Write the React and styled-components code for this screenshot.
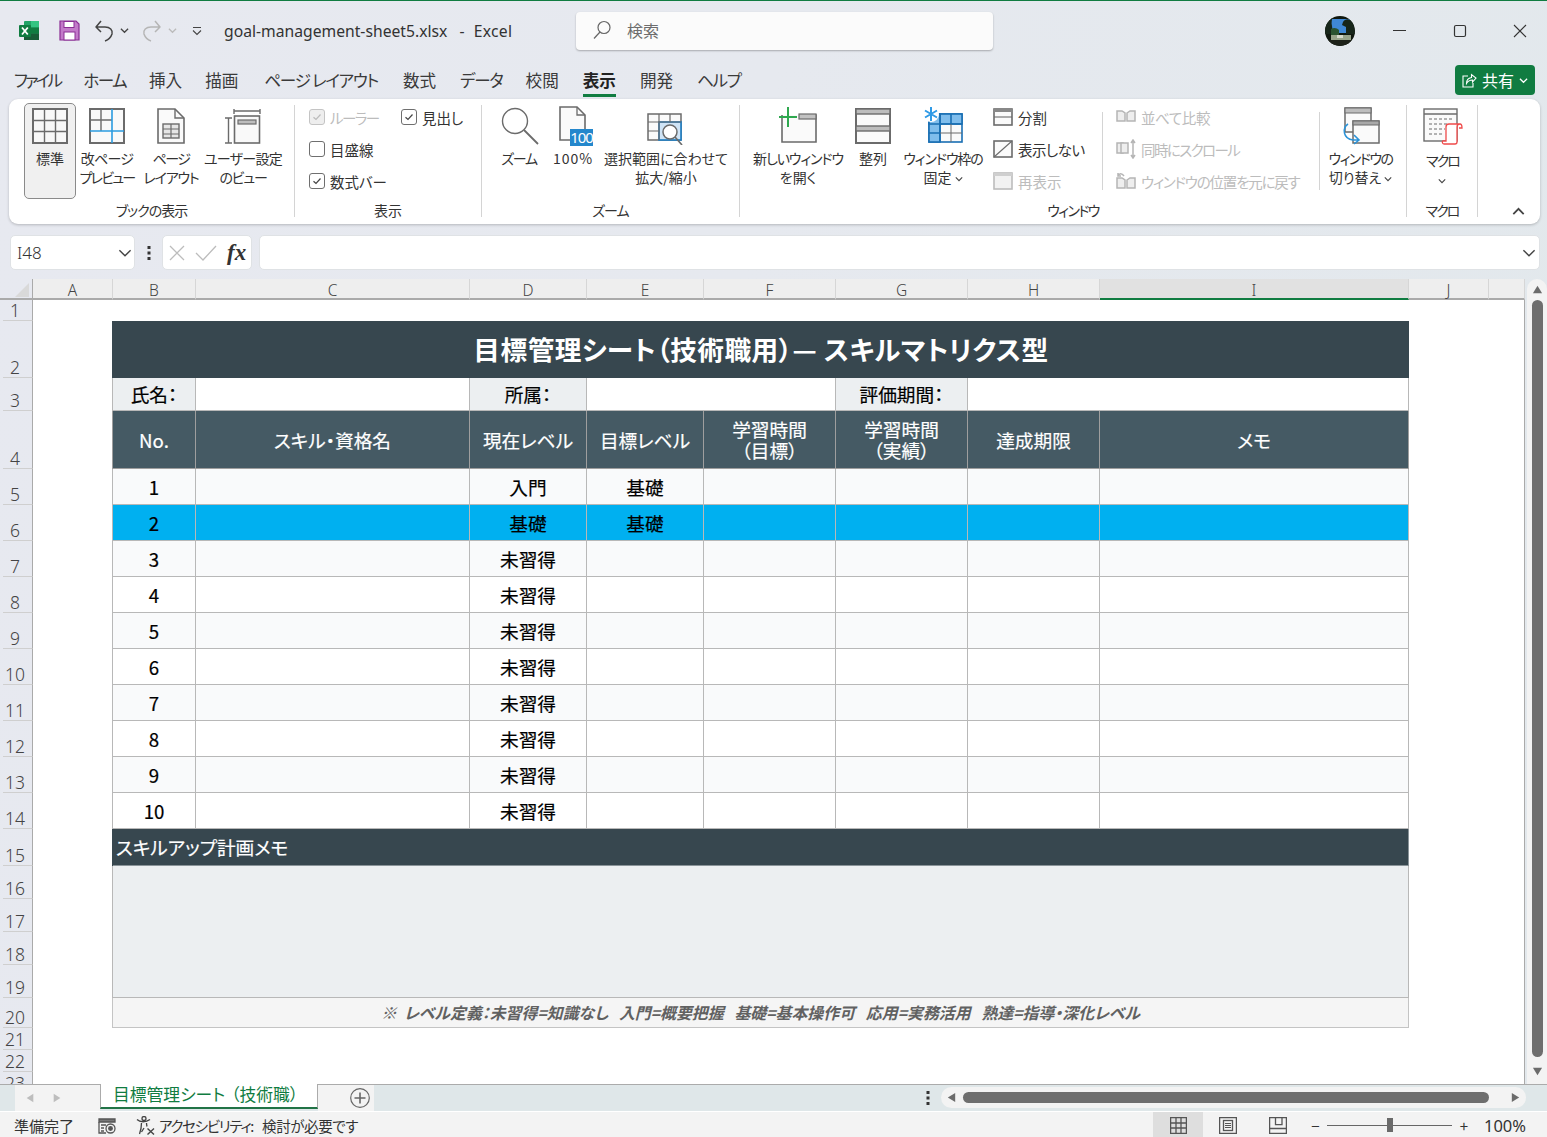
import React from "react";
import styled, { createGlobalStyle } from "styled-components";

const FONT = '"Noto Sans CJK JP", "Noto Sans", sans-serif';
const GREY = "#6b6b6b";
const DIS = "#bcbcbc";

const Global = createGlobalStyle`
  html, body { margin: 0; padding: 0; overflow: hidden; }
  * { box-sizing: border-box; }
  body { font-family: ${FONT}; font-feature-settings: "palt"; color: #333; }
`;

const Shell = styled.div`
  width: 1547px; height: 1137px; display: flex; flex-direction: column; overflow: hidden;
  background: linear-gradient(100deg, #e7e9f0 0%, #e6e9ef 45%, #e2e8ec 100%);
  border-top: 1px solid #107c41;
`;
const Narrow = styled.span`
  letter-spacing: ${p => p.$ls || 0}px; margin-left: ${p => p.$ml || 0}px;
`;
/* ---------- title bar ---------- */
const TitleBar = styled.div`
  height: 59px; display: flex; align-items: center; padding-left: 19px; flex: none;
`;
const QuickIcon = styled.span`
  display: flex; align-items: center; margin-left: ${p => p.$ml || 0}px;
`;
const StatusIcon = styled(QuickIcon)`
  padding-top: 2px;
`;
const FileName = styled.div`
  margin-left: 21px; width: 352px; font: 400 15.7px "Noto Sans", sans-serif; color: #333; white-space: pre; padding-top: 1px;
`;
const SearchBox = styled.div`
  width: 417px; height: 38px; background: #fbfbfb; border-radius: 4px; margin-top: 1px;
  box-shadow: 0 1px 2px rgba(0,0,0,.28); display: flex; align-items: center; padding: 0 0 3px 16px; gap: 15px;
  font-size: 16px; color: #6d6d6d;
`;
const WinControls = styled.div`
  margin-left: auto; margin-right: -3px; display: flex; align-items: center;
`;
const WinBtn = styled.span`
  width: 60px; display: flex; justify-content: center; align-items: center;
`;
const Avatar = styled.span`
  display: flex; margin-right: 15px;
`;
/* ---------- menu ---------- */
const MenuBar = styled.div`
  height: 39px; flex: none; display: flex; align-items: flex-start; padding: 7px 12px 0 14px; gap: 23px; position: relative;
`;
const MenuItem = styled.div`
  font-size: 16.6px; line-height: 26px; height: 30px; color: ${p => (p.$active ? "#222" : "#3a3a3a")};
  font-weight: ${p => (p.$active ? 700 : 400)}; white-space: pre; letter-spacing: ${p => p.$ls || 0}px;
  margin-left: ${p => p.$ml || 0}px;
  border-bottom: ${p => (p.$active ? "3px solid #107c41" : "3px solid transparent")};
`;
const ShareBtn = styled.div`
  margin-left: auto; margin-top: -2px; width: 80px; height: 30px; background: #107c41; color: #fff; border-radius: 4px;
  display: flex; align-items: center; justify-content: center; gap: 5px; font-size: 16px;
`;
/* ---------- ribbon ---------- */
const Ribbon = styled.div`
  flex: none; margin-left: 9px; width: 1531px; height: 125px; background: #fff; border-radius: 9px; padding-top: 6px;
  display: flex; box-shadow: 0 1px 3px rgba(0,0,0,.22); position: relative;
`;
const Group = styled.div`
  width: ${p => p.$w}px; height: 112px; border-right: 1px solid #d4d4d4;
  display: flex; flex-direction: column; padding-left: ${p => p.$pl || 0}px;
`;
const GroupBody = styled.div`
  flex: 1; display: flex; align-items: flex-start; min-height: 0;
`;
const GroupLabel = styled.div`
  height: 18px; line-height: 18px; text-align: center; font-size: 14px; color: #333; margin: 2px 0 -2px -${p => p.$pl || 0}px; flex: none;
  letter-spacing: ${p => p.$ls || 0}px;
`;
const LargeBtn = styled.div`
  width: ${p => p.$w}px; height: 96px; margin-top: -2px; padding-top: 3px; flex: none;
  display: flex; flex-direction: column; align-items: center; border-radius: 5px;
  background: ${p => (p.$on ? "#f0f0f0" : "transparent")}; border: 1px solid ${p => (p.$on ? "#8a8a8a" : "transparent")};
`;
const IconSlot = styled.div`
  height: 38px; display: flex; align-items: center; justify-content: center; flex: none;
`;
const LargeText = styled.div`
  margin-top: ${p => p.$mt ?? 4}px; font-size: 14px; line-height: 19px; text-align: center; white-space: pre; color: #333;
`;
const SmallCol = styled.div`
  width: ${p => p.$w}px; margin-left: ${p => p.$ml || 0}px; margin-top: -4px; flex: none; display: flex; flex-direction: column;
`;
const SmallRow = styled.div`
  height: 32px; display: flex; align-items: center; gap: ${p => p.$gap || 5}px; font-size: 14.5px; white-space: pre;
  color: ${p => (p.$off ? DIS : "#333")}; letter-spacing: ${p => p.$ls || 0}px;
`;
const InnerSep = styled.div`
  width: 1px; height: 78px; margin-top: 7px; background: #d4d4d4; flex: none;
`;
const CheckGrid = styled.div`
  display: grid; grid-template-columns: 92px 80px; margin-top: -4px;
`;
const CheckBox = styled.span`
  width: 16px; height: 16px; border-radius: 3px; flex: none; display: flex; align-items: center; justify-content: center;
  border: 1px solid ${p => (p.$off ? "#c4c4c4" : "#6f6f6f")}; background: ${p => (p.$off ? "#eeeeee" : "#fff")};
`;
const CollapseBtn = styled.span`
  position: absolute; right: 15px; bottom: 6px; display: flex;
`;
/* ---------- formula bar ---------- */
const FormulaBar = styled.div`
  flex: none; height: 55px; padding: 11px 7px 9px 10px; display: flex; align-items: stretch;
`;
const NameBox = styled.div`
  width: 125px; background: #fff; border: 1px solid #dfe2e5; border-radius: 5px; display: flex; align-items: center;
  justify-content: space-between; padding: 0 2px 0 6px; font: 300 17px "Noto Sans", sans-serif; color: #333;
`;
const Dots = styled.div`
  width: 27px; display: flex; align-items: center; justify-content: center;
`;
const FxBox = styled.div`
  width: 90px; background: #fff; border: 1px solid #dfe2e5; border-radius: 5px; display: flex; align-items: center;
  padding-left: 6px; gap: 10px;
`;
const FxText = styled.span`
  font: italic 700 23px "Liberation Serif", serif; color: #333;
`;
const FormulaInput = styled.div`
  flex: 1; margin-left: 7px; background: #fff; border: 1px solid #dfe2e5; border-radius: 5px; display: flex; align-items: center;
  justify-content: flex-end; padding-right: 3px;
`;
/* ---------- sheet ---------- */
const SheetArea = styled.div`
  flex: none; height: 805px; display: flex;
`;
const Sheet = styled.div`
  width: 1525px; height: 805px; overflow: hidden; display: grid;
  grid-template-columns: 33px 80px 83px 274px 117px 117px 132px 132px 132px 309px 80px 36px;
  grid-template-rows: 21px 21px 57px 33px 58px repeat(10, 36px) 37px repeat(4, 33px) 30px 22px 22px 22px;
`;
const Corner = styled.div`
  border-right: 1px solid #aaa; border-bottom: 2px solid #aaa; display: flex; align-items: flex-end; justify-content: flex-end; padding: 0 3px 1px 0;
`;
const ColHead = styled.div`
  display: flex; align-items: center; justify-content: center; padding-top: 2px;
  background: ${p => (p.$active ? "#e1e1e1" : "#eeeeee")}; font: 300 15.5px "Noto Sans", sans-serif; color: #444;
  border-right: 1px solid #d6d6d6;
  border-bottom: 2px solid ${p => (p.$active ? "#107c41" : "#aaa")};
`;
const RowHead = styled.div`
  margin-left: 3px; border-right: 1px solid #aaa; border-bottom: 1px solid #cfcfcf; display: flex; align-items: flex-end; justify-content: center;
  font: 300 17.5px/19px "Noto Sans", sans-serif; color: #444; padding-right: 5px;
`;
const Blank = styled.div`
  background: #fff; grid-column: span ${p => p.$span || 1};
  border-right: ${p => (p.$edge ? `1px solid ${p.$edge}` : "none")};
`;
const Cell = styled.div`
  grid-column: span ${p => p.$span || 1}; grid-row: span ${p => p.$rows || 1};
  background: ${p => p.$bg || "#fff"}; color: ${p => p.$fg || "#000"};
  border-right: 1px solid ${p => p.$line || "#b8b8b8"}; border-bottom: 1px solid ${p => p.$line || "#b8b8b8"};
  display: flex; align-items: center; justify-content: ${p => p.$left ? "flex-start" : "center"}; text-align: center;
  font-size: 18.67px; line-height: 21px; white-space: pre; -webkit-text-stroke: .2px currentColor;
  padding: 0 0 1px ${p => (p.$left ? 3 : 0)}px;
`;
const TitleCell = styled(Cell)`
  font-size: 26.67px; font-weight: 700; color: #fff; background: #37474f; border: none; letter-spacing: .5px; padding-bottom: 2px; -webkit-text-stroke: 0;
`;
const NoteCell = styled(Cell)`
  font-size: 15.9px; font-style: italic; font-weight: 700; color: #616161; background: #f5f5f5; -webkit-text-stroke: 0;
`;
/* ---------- vertical scrollbar ---------- */
const VScroll = styled.div`
  margin-left: 2px; width: 20px; height: 805px; background: #f3f3f3; border-radius: 10px 10px 0 0;
  display: flex; flex-direction: column; align-items: center; padding-top: 5px;
`;
const VThumb = styled.div`
  width: 11px; height: 757px; margin: 5px 0 9px; background: #6e6e6e; border-radius: 6px; flex: none;
`;
/* ---------- sheet tabs ---------- */
const TabBar = styled.div`
  flex: none; height: 28px; display: flex; background: #dfe7e9; border-top: 1px solid #ababab; border-bottom: 1px solid #fff; position: relative;
`;
const TabNav = styled.div`
  margin-left: 15px; width: 85px; background: #f3f3f3; display: flex; align-items: center; gap: 17px; padding-left: 10px;
`;
const SheetTab = styled.div`
  width: 218px; background: #fff; margin-top: -1px; border-left: 1px solid #ababab; border-right: 1px solid #ababab; border-bottom: 2px solid #217346;
  color: #107c41; font-size: 16.8px; line-height: 20px; padding-left: 12px; height: 25px; white-space: pre;
`;
const AddArea = styled.div`
  width: 56px; background: #f3f3f3; display: flex; align-items: center; padding-left: 32px;
`;
const TabDots = styled.div`
  margin-left: 546px; width: 16px; display: flex; justify-content: center; align-items: center;
`;
const HScroll = styled.div`
  margin-left: 5px; width: 585px; height: 21px; margin-top: 2px; background: #f3f3f3; border-radius: 11px; display: flex; align-items: center; padding-left: 5px;
`;
const HThumb = styled.div`
  width: 526px; height: 11px; background: #6e6e6e; border-radius: 6px; margin: 0 21px 0 6px;
`;
/* ---------- status bar ---------- */
const StatusBar = styled.div`
  flex: 1; background: #f3f3f3; display: flex; align-items: center; font-size: 15px; color: #333; padding-left: 14px;
`;
const StatusText = styled.span`
  margin-left: ${p => p.$ml || 0}px; white-space: pre; letter-spacing: ${p => p.$ls || 0}px; font-size: ${p => p.$size || 15}px; padding-top: 2px;
`;
const StatusRight = styled.div`
  margin-left: auto; display: flex; align-items: center; height: 100%; padding-right: 21px;
`;
const ViewBtn = styled.div`
  width: 50px; height: 100%; padding-top: 2px; display: flex; align-items: center; justify-content: center; background: ${p => (p.$on ? "#dedede" : "transparent")};
`;
const ZoomTrack = styled.div`
  width: 125px; height: 1px; margin: 2px 8px 0 7px; background: #666; position: relative;
`;
const ZoomThumb = styled.div`
  position: absolute; left: 60px; top: -7px; width: 6px; height: 14px; background: #6a6a6a;
`;
const ZoomText = styled.span`
  font: 400 16.5px "Noto Sans", sans-serif; color: #333; margin-left: 16px; padding-top: 2px;
`;

/* ---------- icons ---------- */
const Chevron = ({ size = 9, color = "#444", up, w = 1.4 }) => (
  <svg width={size} height={size} viewBox="0 0 10 10" fill="none" stroke={color} strokeWidth={w}>
    <path d={up ? "M1 7 5 3l4 4" : "M1 3l4 4 4-4"} />
  </svg>
);
const Check = ({ color = "#444" }) => (
  <svg width="12" height="12" viewBox="0 0 12 12" fill="none" stroke={color} strokeWidth="1.2"><path d="M2.5 6.2 5 8.5l4.5-5" /></svg>
);
const ExcelLogo = () => (
  <svg width="21" height="21" viewBox="0 0 21 21">
    <rect x="5" y="1" width="15" height="19" rx="1" fill="#21a366" />
    <rect x="12" y="1" width="8" height="6.5" fill="#33c481" />
    <rect x="12" y="7.5" width="8" height="6" fill="#107c41" />
    <rect x="5" y="13.5" width="15" height="6.5" fill="#185c37" />
    <rect x="0" y="5" width="12" height="12" rx="1" fill="#107c41" />
    <path d="M3 7.5 8.8 14.5M8.8 7.5 3 14.5" stroke="#fff" strokeWidth="1.8" />
  </svg>
);
const SaveIcon = () => (
  <svg width="21" height="21" viewBox="0 0 21 21">
    <path d="M1 1h16l3 3v16H1z" fill="#c27ac9" stroke="#8a2e94" strokeWidth="1.2" />
    <rect x="5" y="1.5" width="10" height="6" fill="#fff" stroke="#8a2e94" />
    <rect x="5" y="12" width="11" height="8" fill="#fff" stroke="#8a2e94" />
  </svg>
);
const UndoIcon = ({ color = "#444", flip }) => (
  <svg width="22" height="22" viewBox="0 0 22 22" fill="none" stroke={color} strokeWidth="1.5" style={flip ? { transform: "scaleX(-1)" } : undefined}>
    <path d="M7 1 2 7h9c5 0 8 3 7 7-1 3-4 6-7 7M2 7l5 5" strokeLinejoin="round" />
  </svg>
);
const QatMore = () => (
  <svg width="12" height="12" viewBox="0 0 12 12" fill="none" stroke="#444" strokeWidth="1.1"><path d="M2 2.5h8M2 5.5l4 4 4-4" /></svg>
);
const SearchIcon = () => (
  <svg width="20" height="20" viewBox="0 0 20 20" fill="none" stroke="#666" strokeWidth="1.2"><circle cx="12" cy="7.5" r="6" /><path d="M8 12 2 18.5" /></svg>
);
const AvatarIcon = () => (
  <svg width="30" height="30" viewBox="0 0 30 30">
    <defs><clipPath id="av"><circle cx="15" cy="15" r="15" /></clipPath></defs>
    <g clipPath="url(#av)">
      <rect width="30" height="30" fill="#10180f" />
      <rect x="5" y="3" width="20" height="14" fill="#3f88d6" />
      <path d="M0 0h8c-1 3-2 7-1 10l1 8H0zM18 6c2-4 7-3 10-1l2 13h-9l0-7-4-2z" fill="#17261a" />
      <path d="M6 13c3-2 6-1 8 1v5H6z" fill="#2b5330" />
      <rect x="6" y="19" width="20" height="5" fill="#98a38a" />
      <rect x="12" y="19" width="6" height="3" fill="#d5d9cb" />
      <path d="M0 24h30v6H0z" fill="#1d2119" />
    </g>
  </svg>
);
const WinMin = () => <svg width="14" height="14" fill="none" stroke="#333"><path d="M0 6.5h13" /></svg>;
const WinMax = () => <svg width="14" height="14" fill="none" stroke="#333" strokeWidth="1.2"><rect x="1.5" y="1.5" width="11" height="11" rx="1.5" /></svg>;
const WinClose = () => <svg width="14" height="14" fill="none" stroke="#333" strokeWidth="1.1"><path d="M1 1l12 12M13 1 1 13" /></svg>;
const ShareIcon = () => (
  <svg width="15" height="15" viewBox="0 0 15 15" fill="none" stroke="#fff" strokeWidth="1.1">
    <path d="M6 3H1v11h10V10" /><path d="M4.5 10.500c0-3 2-5.500 5-6V1.500L14 5l-3.500 4V7c-3 0-4.500 1-6 3.500z" />
  </svg>
);
const Big = ({ w = 38, h = 38, children }) => (
  <svg width={w} height={h} viewBox={`0 0 ${w} ${h}`} fill="none" stroke={GREY} strokeWidth="2">{children}</svg>
);
const NormalIcon = () => (
  <Big><rect x="2" y="2" width="34" height="34" fill="#f8f8f8" />
    <path strokeWidth="1.4" d="M13.5 2v34M24.5 2v34M2 13.5h34M2 24.5h34" /></Big>
);
const BreakIcon = () => (
  <Big><rect x="2" y="2" width="34" height="34" fill="#f9f9f9" />
    <path strokeWidth="1.4" d="M13 2v22M2 13h22" />
    <path stroke="#2b9ce0" strokeWidth="1.6" d="M24 2v34M2 24h34" /></Big>
);
const PageIcon = () => (
  <Big w={30}><path strokeWidth="1.6" fill="#fafafa" d="M2 2h17l9 9v25H2z" /><path strokeWidth="1.4" d="M19 2v9h9" />
    <rect x="7" y="17" width="16" height="14" strokeWidth="1.4" fill="#e6e6e6" />
    <path strokeWidth="1.2" d="M7 22h16M7 27h16M15 17v14" /></Big>
);
const CustomIcon = () => (
  <Big w={38}>
    <path strokeWidth="1.4" d="M10 2v5M36 2v5M10 4h26" />
    <path strokeWidth="1.4" d="M1 11h7M4.5 11v25M1 36h7" />
    <rect x="10.5" y="9" width="25" height="27" strokeWidth="1.6" fill="#f9f9f9" />
    <rect x="14" y="13" width="18" height="4" strokeWidth="1.2" fill="#bdbdbd" />
  </Big>
);
const ZoomIcon = () => (
  <svg width="40" height="40" viewBox="0 0 40 40" fill="none" stroke={GREY} strokeWidth="1.4">
    <circle cx="16" cy="15" r="12.5" /><path strokeWidth="1.8" d="M25 24l14 14" />
  </svg>
);
const HundredIcon = () => (
  <svg width="40" height="40" viewBox="-6 0 40 40" fill="none" stroke={GREY} strokeWidth="1.6">
    <path d="M1 1h17l8 8v25H1z" fill="#fafafa" /><path strokeWidth="1.3" d="M18 1v8h8" />
    <rect x="11" y="23" width="23" height="17" fill="#2487cc" stroke="none" />
    <text x="22.5" y="37" textAnchor="middle" fontSize="15" fontFamily='"Noto Sans", sans-serif' fill="#fff" stroke="none" letterSpacing="-1">100</text>
  </svg>
);
const FitIcon = () => (
  <svg width="38" height="38" viewBox="0 -3 38 38" fill="none" stroke={GREY} strokeWidth="1.5">
    <rect x="1" y="4" width="33" height="26" fill="#fafafa" />
    <rect x="12" y="12" width="22" height="18" fill="#cfe4f6" stroke="#1a7cc4" strokeWidth="1.6" />
    <path strokeWidth="1.2" d="M12 4v26M23 4v8M1 12h33M1 21h11" />
    <circle cx="23" cy="22" r="7" fill="#fff" /><path strokeWidth="1.6" d="M28 27l7 8" />
  </svg>
);
const NewWinIcon = () => (
  <svg width="38" height="38" viewBox="0 0 38 38" fill="none" stroke={GREY} strokeWidth="1.6">
    <path d="M3 8v27h34V8H20" fill="#fafafa" /><rect x="20" y="7" width="17" height="5" fill="#c2c2c2" strokeWidth="1.2" />
    <path stroke="#2fa84f" strokeWidth="2" d="M9 0v20M0 10h18" />
  </svg>
);
const ArrangeIcon = () => (
  <Big><rect x="2" y="2" width="34" height="34" fill="#fafafa" />
    <rect x="2" y="2" width="34" height="5" fill="#bdbdbd" strokeWidth="1.4" />
    <rect x="2" y="19" width="34" height="5" fill="#bdbdbd" strokeWidth="1.4" /></Big>
);
const FreezeIcon = () => (
  <svg width="40" height="40" viewBox="0 0 40 40" fill="none" stroke="#1a6fb3" strokeWidth="1.6">
    <rect x="6" y="8" width="33" height="28" fill="#fafafa" />
    <rect x="6" y="8" width="33" height="10" fill="#7fbdec" />
    <rect x="6" y="8" width="11" height="28" fill="#7fbdec" />
    <path d="M17 8v28M28 8v10M6 18h33M6 27h11" /><path stroke={GREY} strokeWidth="1" d="M28 18v18M17 27h22" />
    <circle cx="8" cy="8" r="8" fill="#fff" stroke="none" />
    <path stroke="#2f9ae6" strokeWidth="2" d="M8 1v14M2 4.500l12 7M14 4.500l-12 7" />
  </svg>
);
const SmallSplit = () => (
  <svg width="20" height="18" viewBox="0 0 20 18" fill="none" stroke={GREY} strokeWidth="1.6">
    <rect x="1" y="1" width="18" height="16" fill="#fafafa" /><rect x="1" y="1" width="18" height="3" fill="#888" stroke="none" /><path d="M1 9h18" strokeWidth="1.1" /></svg>
);
const SmallHide = () => (
  <svg width="20" height="18" viewBox="0 0 20 18" fill="none" stroke={GREY} strokeWidth="1.6">
    <rect x="1" y="1" width="18" height="16" fill="#fafafa" /><path d="M1 17 19 1" strokeWidth="1.2" /></svg>
);
const SmallShow = () => (
  <svg width="20" height="18" viewBox="0 0 20 18" fill="#f2f2f2" stroke={DIS} strokeWidth="1.6">
    <rect x="1" y="1" width="18" height="16" /><rect x="1" y="1" width="18" height="3" fill="#cfcfcf" stroke="none" /></svg>
);
const Book = ({ y = 4 }) => (
  <g fill="#eee" stroke="#b5b5b5" strokeWidth="1.5">
    <path d={`M1 ${y}h5l3 2v8H1z`} /><path d={`M11 ${y + 2}l3-2h5v10h-8z`} />
  </g>
);
const CompareIcon = () => <svg width="20" height="18" viewBox="0 0 20 18"><Book y={3} /></svg>;
const SyncIcon = () => (
  <svg width="20" height="20" viewBox="0 0 20 20" fill="none" stroke="#b5b5b5" strokeWidth="1.5">
    <path d="M1 4h6v10H1z" fill="#eee" /><path d="M5 4h7v10H5z" fill="#eee" /><path d="M17 1v18M15 4l2-3 2 3M15 16l2 3 2-3" />
  </svg>
);
const ResetIcon = () => (
  <svg width="20" height="20" viewBox="0 0 20 20" fill="none" stroke="#b5b5b5" strokeWidth="1.5">
    <Book y={7} /><path d="M8 5C6 2 3 2 2 5M2 2v3h3" />
  </svg>
);
const SwitchIcon = () => (
  <svg width="38" height="38" viewBox="0 0 38 38" fill="none" stroke={GREY} strokeWidth="1.5">
    <rect x="3" y="1" width="26" height="24" fill="#fafafa" /><rect x="3" y="1" width="26" height="5" fill="#bdbdbd" strokeWidth="1" />
    <rect x="11" y="14" width="26" height="22" fill="#fafafa" /><rect x="11" y="14" width="26" height="4" fill="#a8a8a8" strokeWidth="1" />
    <path stroke="#2b93d8" strokeWidth="1.6" d="M6 17c-6 4-5 15 5 16h6M12 28l5 5-5 4" />
  </svg>
);
const MacroIcon = () => (
  <svg width="40" height="38" viewBox="0 -1 40 38" fill="none" stroke={GREY} strokeWidth="1.4">
    <rect x="1" y="1" width="33" height="32" fill="#fafafa" /><path d="M1 6h33" strokeWidth="1.4" />
    <path strokeDasharray="3 2" strokeWidth="1.1" d="M6 11h24M6 16h20M6 21h16M6 26h14" />
    <path stroke="#ef4a4a" strokeWidth="1.3" fill="#fff" d="M21 36h11c2 0 2-2 2-2V19c0-2 1-3 3-3h-11c-2 0-3 1-3 3v14h-3c-1 0-1 3 1 3zM37 16c2 0 2 2 2 4h-3" />
  </svg>
);
const Triangle = ({ dir, color = GREY, size = 11 }) => {
  const d = { up: "M1 10 6 2l5 8z", down: "M1 2h10L6 10z", left: "M10 1v10L2 6z", right: "M2 1v10l8-5z" }[dir];
  return <svg width={size} height={size} viewBox="0 0 12 12" fill={color}><path d={d} /></svg>;
};
const VDots = ({ color = "#333" }) => (
  <svg width="4" height="14" viewBox="0 0 4 14" fill={color}><rect width="3" height="3" x=".5" /><rect width="3" height="3" x=".5" y="5.500" /><rect width="3" height="3" x=".5" y="11" /></svg>
);
const CrossIcon = () => <svg width="16" height="16" fill="none" stroke="#bcbcbc" strokeWidth="1.3"><path d="M1 1l14 14M15 1 1 15" /></svg>;
const TickIcon = () => <svg width="22" height="16" fill="none" stroke="#bcbcbc" strokeWidth="1.3"><path d="M1 8l7 7L21 1" /></svg>;
const PlusCircle = () => (
  <svg width="20" height="20" viewBox="0 0 20 20" fill="none" stroke="#666" strokeWidth="1.2"><circle cx="10" cy="10" r="9.300" /><path strokeWidth="1.6" d="M10 4.500v11M4.500 10h11" /></svg>
);
const RecordIcon = () => (
  <svg width="18" height="16" viewBox="0 0 18 16" fill="none" stroke="#555" strokeWidth="1.3">
    <path d="M1 1h16v3H1z" fill="#777" /><path d="M1 4v11h7M3 7h5M3 10h3M3 13h3" /><circle cx="12.500" cy="10.500" r="4.500" /><circle cx="12.500" cy="10.500" r="1.800" fill="#555" />
  </svg>
);
const AccessIcon = () => (
  <svg width="19" height="19" viewBox="0 0 19 19" fill="none" stroke="#444" strokeWidth="1.3">
    <circle cx="8" cy="2.500" r="2" /><path d="M1 3.500c3 3 9 3 13 0M5.500 7c0 4-.5 7-2 11M10.500 7c0 1 .2 2 .5 3.500M8 12l-2.500 4" /><path strokeWidth="1.4" d="M11.500 12.500l6.500 6M18 12.500l-6.500 6" />
  </svg>
);
const GridView = () => (
  <svg width="17" height="17" viewBox="0 0 17 17" fill="none" stroke="#555" strokeWidth="1.3"><rect x=".6" y=".6" width="15.800" height="15.800" /><path d="M6 .6v15.800M11 .6v15.800M.6 6h15.800M.6 11h15.800" /></svg>
);
const PageView = () => (
  <svg width="18" height="17" viewBox="0 0 18 17" fill="none" stroke="#555" strokeWidth="1.3"><rect x=".6" y=".6" width="16.800" height="15.800" /><rect x="4.500" y="3.500" width="9" height="10" /><path strokeWidth="1" d="M6 6.500h6M6 8.500h6M6 10.500h6" /></svg>
);
const BreakView = () => (
  <svg width="18" height="17" viewBox="0 0 18 17" fill="none" stroke="#555" strokeWidth="1.3"><rect x=".6" y=".6" width="16.800" height="15.800" /><path d="M.6 11.500h16.800M6.500 .6v7h6.500V.6" /></svg>
);

/* ---------- data ---------- */
const MENU = [["ファイル", -2.8], ["ホーム", -1.6], ["挿入"], ["描画"], ["ページ レイアウト", -1.3, 3], ["数式", 0, 2], ["データ", -1.3, 1], ["校閲"], ["表示", 0, 1], ["開発", 0, 1], ["ヘルプ", -1.3, 1]];
const COLS = ["A", "B", "C", "D", "E", "F", "G", "H", "I", "J", ""];
const ROWS = [
  [1, "入門", "基礎"], [2, "基礎", "基礎"], [3, "未習得", ""], [4, "未習得", ""], [5, "未習得", ""],
  [6, "未習得", ""], [7, "未習得", ""], [8, "未習得", ""], [9, "未習得", ""], [10, "未習得", ""],
];
const HEADS = ["No.", "スキル・資格名", "現在レベル", "目標レベル", "学習時間\n（目標）", "学習時間\n（実績）", "達成期限", "メモ"];
const DARK = "#37474f";
const HEAD = "#455a64";
const LABEL = "#eceff1";
const HEAD_LINE = "#9e9e9e";

const RowBg = i => (i === 1 ? "#00b0f0" : i % 2 === 0 ? "#f9fafb" : "#ffffff");

const Btn = ({ w, on, icon, text, mt }) => (
  <LargeBtn $w={w} $on={on}>
    <IconSlot>{icon}</IconSlot>
    <LargeText $mt={mt}>{text}</LargeText>
  </LargeBtn>
);
const Chk = ({ on, off, text, ls }) => (
  <SmallRow $off={off} $gap={5} $ls={ls}>
    <CheckBox $off={off}>{on && <Check color={off ? "#bbb" : "#444"} />}</CheckBox>
    {text}
  </SmallRow>
);

export default function App() {
  const rowNo = n => <RowHead>{n}</RowHead>;
  return (
    <Shell>
      <Global />
      <TitleBar>
        <QuickIcon><ExcelLogo /></QuickIcon>
        <QuickIcon $ml={19}><SaveIcon /></QuickIcon>
        <QuickIcon $ml={14}><UndoIcon /></QuickIcon>
        <QuickIcon $ml={4}><Chevron size={9} /></QuickIcon>
        <QuickIcon $ml={11}><UndoIcon color="#b5b5b5" flip /></QuickIcon>
        <QuickIcon $ml={6}><Chevron size={9} color="#bbb" /></QuickIcon>
        <QuickIcon $ml={14}><QatMore /></QuickIcon>
        <FileName>goal-management-sheet5.xlsx<Narrow $ml={4}>  -  </Narrow><Narrow $ml={1} $ls={.3}>Excel</Narrow></FileName>
        <SearchBox><SearchIcon />検索</SearchBox>
        <WinControls>
          <Avatar><AvatarIcon /></Avatar>
          <WinBtn><WinMin /></WinBtn>
          <WinBtn><WinMax /></WinBtn>
          <WinBtn><WinClose /></WinBtn>
        </WinControls>
      </TitleBar>
      <MenuBar>
        {MENU.map(([m, ls, ml]) => <MenuItem key={m} $active={m === "表示"} $ls={ls} $ml={ml}>{m}</MenuItem>)}
        <ShareBtn><ShareIcon />共有<Chevron size={9} color="#fff" /></ShareBtn>
      </MenuBar>
      <Ribbon>
        <Group $w={286} $pl={15}>
          <GroupBody>
            <Btn w={52} on icon={<NormalIcon />} text="標準" />
            <Btn w={62} icon={<BreakIcon />} text={<><Narrow $ls={-.8}>改ページ</Narrow>{"\n"}<Narrow $ls={-1.8}>プレビュー</Narrow></>} />
            <Btn w={66} icon={<PageIcon />} text={<><Narrow $ls={-1.5}>ページ</Narrow>{"\n"}<Narrow $ls={-1.2}>レイアウト</Narrow></>} />
            <Btn w={78} icon={<CustomIcon />} text={<><Narrow $ls={-.7}>ユーザー設定</Narrow>{"\n"}<Narrow $ls={-1.2}>のビュー</Narrow></>} />
          </GroupBody>
          <GroupLabel $pl={15} $ls={-1}>ブックの表示</GroupLabel>
        </Group>
        <Group $w={187} $pl={14}>
          <GroupBody>
            <CheckGrid>
              <Chk on off text="ルーラー" ls={-1.5} />
              <Chk on text="見出し" />
              <Chk text="目盛線" />
              <span />
              <Chk on text="数式バー" />
            </CheckGrid>
          </GroupBody>
          <GroupLabel $pl={14}>表示</GroupLabel>
        </Group>
        <Group $w={258} $pl={13}>
          <GroupBody>
            <Btn w={48} icon={<ZoomIcon />} text={<Narrow $ls={-1.3}>ズーム</Narrow>} />
            <Btn w={60} icon={<HundredIcon />} text={<Narrow $ls={1}>100%</Narrow>} />
            <Btn w={126} icon={<FitIcon />} text={"選択範囲に合わせて\n拡大/縮小"} />
          </GroupBody>
          <GroupLabel $pl={13} $ls={-1}>ズーム</GroupLabel>
        </Group>
        <Group $w={667} $pl={12}>
          <GroupBody>
            <Btn w={92} icon={<NewWinIcon />} text={<><Narrow $ls={-1.1}>新しいウィンドウ</Narrow>{"\n"}を開く</>} />
            <Btn w={58} icon={<ArrangeIcon />} text="整列" />
            <Btn w={82} icon={<FreezeIcon />} text={<><Narrow $ls={-1.1}>ウィンドウ枠の</Narrow>{"\n"}固定 <Chevron size={8} /></>} />
            <SmallCol $w={109} $ml={9}>
              <SmallRow><SmallSplit />分割</SmallRow>
              <SmallRow $ls={-.5}><SmallHide />表示しない</SmallRow>
              <SmallRow $off><SmallShow />再表示</SmallRow>
            </SmallCol>
            <InnerSep />
            <SmallCol $w={203} $ml={13}>
              <SmallRow $off $ls={-.4}><CompareIcon />並べて比較</SmallRow>
              <SmallRow $off $ls={-1.6}><SyncIcon />同時にスクロール</SmallRow>
              <SmallRow $off $ls={-1.2}><ResetIcon />ウィンドウの位置を元に戻す</SmallRow>
            </SmallCol>
            <InnerSep />
            <Btn w={81} icon={<SwitchIcon />} text={<><Narrow $ls={-1.5}>ウィンドウの</Narrow>{"\n"}切り替え <Chevron size={8} /></>} />
          </GroupBody>
          <GroupLabel $pl={12} $ls={-1.6}>ウィンドウ</GroupLabel>
        </Group>
        <Group $w={71}>
          <GroupBody>
            <Btn w={71} mt={6} icon={<MacroIcon />} text={<><Narrow $ls={-2}>マクロ</Narrow>{"\n"}<Chevron size={8} /></>} />
          </GroupBody>
          <GroupLabel $ls={-2}>マクロ</GroupLabel>
        </Group>
        <CollapseBtn><Chevron size={13} up /></CollapseBtn>
      </Ribbon>
      <FormulaBar>
        <NameBox>I48<Chevron size={14} w={1} /></NameBox>
        <Dots><VDots /></Dots>
        <FxBox><CrossIcon /><TickIcon /><FxText>fx</FxText></FxBox>
        <FormulaInput><Chevron size={14} w={1} /></FormulaInput>
      </FormulaBar>
      <SheetArea>
        <Sheet>
          <Corner><svg width="14" height="14"><path d="M14 0v14H0z" fill="#d9d9d9" /></svg></Corner>
          {COLS.map((c, i) => <ColHead key={i} $active={c === "I"}>{c}</ColHead>)}

          {rowNo(1)}<Blank $span={11} $edge="#aaa" />

          {rowNo(2)}<Blank $edge={DARK} />
          <TitleCell $span={8}>目標管理シート（技術職用）— スキルマトリクス型</TitleCell>
          <Blank $span={2} $edge="#aaa" />

          {rowNo(3)}<Blank $edge="#b8b8b8" />
          <Cell $bg={LABEL}>氏名：</Cell>
          <Cell />
          <Cell $bg={LABEL}>所属：</Cell>
          <Cell $span={2} />
          <Cell $bg={LABEL}>評価期間：</Cell>
          <Cell $span={2} />
          <Blank $span={2} $edge="#aaa" />

          {rowNo(4)}<Blank $edge={HEAD_LINE} />
          {HEADS.map(h => <Cell key={h} $bg={HEAD} $fg="#fff" $line={HEAD_LINE}>{h}</Cell>)}
          <Blank $span={2} $edge="#aaa" />

          {ROWS.map(([n, cur, goal], i) => (
            <React.Fragment key={n}>
              {rowNo(n + 4)}<Blank $edge="#b8b8b8" />
              <Cell $bg={RowBg(i)}>{n}</Cell>
              <Cell $bg={RowBg(i)} />
              <Cell $bg={RowBg(i)}>{cur}</Cell>
              <Cell $bg={RowBg(i)}>{goal}</Cell>
              <Cell $bg={RowBg(i)} /><Cell $bg={RowBg(i)} /><Cell $bg={RowBg(i)} /><Cell $bg={RowBg(i)} />
              <Blank $span={2} $edge="#aaa" />
            </React.Fragment>
          ))}

          {rowNo(15)}<Blank $edge={DARK} />
          <Cell $span={8} $bg={DARK} $fg="#fff" $left $line="#8a9499">スキルアップ計画メモ</Cell>
          <Blank $span={2} $edge="#aaa" />

          {rowNo(16)}<Blank $edge="#b8b8b8" />
          <Cell $span={8} $rows={4} $bg={LABEL} />
          <Blank $span={2} $edge="#aaa" />
          {rowNo(17)}<Blank $edge="#b8b8b8" /><Blank $span={2} $edge="#aaa" />
          {rowNo(18)}<Blank $edge="#b8b8b8" /><Blank $span={2} $edge="#aaa" />
          {rowNo(19)}<Blank $edge="#b8b8b8" /><Blank $span={2} $edge="#aaa" />

          {rowNo(20)}<Blank $edge="#c4c4c4" />
          <NoteCell $span={8} $line="#c4c4c4">※  レベル定義：未習得=知識なし   入門=概要把握   基礎=基本操作可   応用=実務活用   熟達=指導・深化レベル</NoteCell>
          <Blank $span={2} $edge="#aaa" />

          {rowNo(21)}<Blank $span={11} $edge="#aaa" />
          {rowNo(22)}<Blank $span={11} $edge="#aaa" />
          {rowNo(23)}<Blank $span={11} $edge="#aaa" />
        </Sheet>
        <VScroll>
          <Triangle dir="up" />
          <VThumb />
          <Triangle dir="down" />
        </VScroll>
      </SheetArea>
      <TabBar>
        <TabNav><Triangle dir="left" color="#bdbdbd" size={10} /><Triangle dir="right" color="#bdbdbd" size={10} /></TabNav>
        <SheetTab>目標管理シート<Narrow $ml={6}>（技術職）</Narrow></SheetTab>
        <AddArea><PlusCircle /></AddArea>
        <TabDots><VDots /></TabDots>
        <HScroll>
          <Triangle dir="left" />
          <HThumb />
          <Triangle dir="right" />
        </HScroll>
      </TabBar>
      <StatusBar>
        <StatusText>準備完了</StatusText>
        <StatusIcon $ml={24}><RecordIcon /></StatusIcon>
        <StatusIcon $ml={20}><AccessIcon /></StatusIcon>
        <StatusText $ml={4} $size={14.5} $ls={-1.3}>アクセシビリティ:</StatusText>
        <StatusText $ml={9} $size={14.5} $ls={-.4}>検討が必要です</StatusText>
        <StatusRight>
          <ViewBtn $on><GridView /></ViewBtn>
          <ViewBtn><PageView /></ViewBtn>
          <ViewBtn><BreakView /></ViewBtn>
          <StatusText $ml={8}>−</StatusText>
          <ZoomTrack><ZoomThumb /></ZoomTrack>
          <StatusText>+</StatusText>
          <ZoomText>100%</ZoomText>
        </StatusRight>
      </StatusBar>
    </Shell>
  );
}
